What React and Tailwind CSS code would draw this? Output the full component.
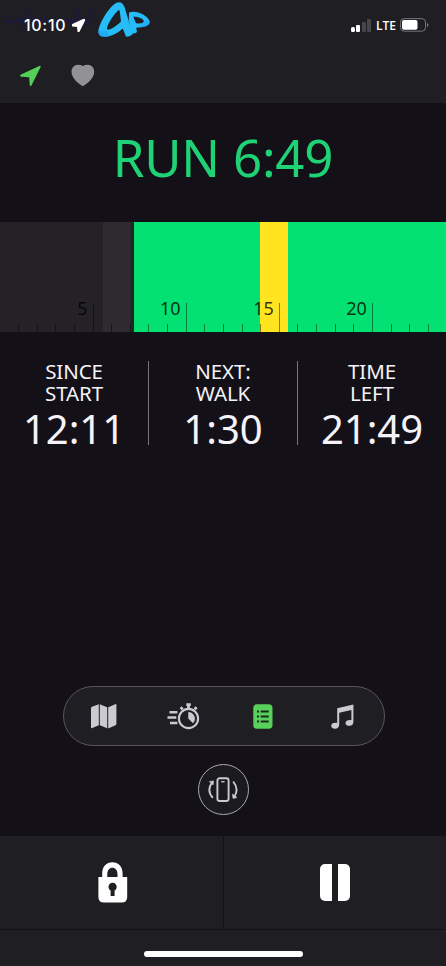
import { clsx } from "clsx";

const minutes = Array.from({ length: 24 }, (_, i) => i + 1);

const stats = [
  { label: ["SINCE", "START"], value: "12:11" },
  { label: ["NEXT:", "WALK"], value: "1:30" },
  { label: ["TIME", "LEFT"], value: "21:49" },
];

const NavArrow = ({ className }) => (
  <svg viewBox="0 0 22 22" className={className} fill="currentColor">
    <path d="M20.3 .4 1 9.5C-.2 10.1 0 11.6 1.2 11.8L9.6 12.4 10.2 20.5C10.3 21.8 11.5 22 12 20.9L21.6 1.7C22 .7 21.2 0 20.3 .4Z" />
  </svg>
);

const Logo = () => (
  <svg viewBox="97 1 54 38" className="h-[38px] w-[54px]" fillRule="evenodd">
    <path
      fill="#25bcf8"
      d="M98.3 32C98.5 24 109 7 116 3C120 .8 123 3 124.5 7L132.7 34.3Q129.5 36.8 126 36.8L122.8 28.5C117 34 109 37.5 103 36.8Q98.5 36 98.3 32ZM118.3 10.2C114 14 107.5 24 107 28.2C107 31.5 113 29 121 21.5L119.8 11.5Q119.3 9.4 118.3 10.2Z"
    />
    <path
      fill="#25bcf8"
      d="M129 12.5C136 9.5 147 15 149.6 21C151 26 143 27.5 136.2 27.7L137 32Q135 34 131.3 33.5L128.8 20ZM133.3 16.8L136 23.3C140 23.7 144.3 23 143.8 20.9C142.8 18.4 137.5 16.4 133.3 16.8Z"
    />
    <path fill="#1687ee" d="M98.8 29Q101 34 106.6 30.2L109 36.8Q106 37.2 103 36.8Q98.5 36 98.3 32Z" opacity=".35" />
    <path fill="#1687ee" d="M143.8 20.9L149.6 21C151 26 143 27.5 138 27.7Z" opacity=".25" />
  </svg>
);

const StatusBar = () => (
  <div className="relative flex h-[50px] items-start">
    <div dir="rtl" className="absolute left-0 top-0 w-[96px] text-center font-['DejaVu_Sans',sans-serif] text-[19px] leading-[32px] whitespace-nowrap text-[#1b1a44]">
      اولین سایت
    </div>
    <div className="relative ml-[24px] mt-[15px] w-[46px] font-['Inter',sans-serif] text-[16px] font-medium leading-5 tracking-[0.7px] text-white">
      10:10
    </div>
    <NavArrow className="relative ml-[2px] mt-[19px] h-[13px] w-[13px] stroke-white stroke-2 text-white" />
    <div className="ml-[12px] mt-px">
      <Logo />
    </div>
    <div className="ml-auto mr-[17px] mt-[18px] flex items-center">
      <div className="flex h-[13px] items-end gap-[1.5px]">
        <span className="h-[5px] w-[4px] rounded-[1.5px] bg-white" />
        <span className="h-[7px] w-[4px] rounded-[1px] bg-white" />
        <span className="h-[10px] w-[4px] rounded-[1px] bg-[#47464b]" />
        <span className="h-[13px] w-[4px] rounded-[1px] bg-[#47464b]" />
      </div>
      <span className="ml-[5px] font-['Open_Sans',sans-serif] text-[12px] font-semibold leading-[13px] text-white">LTE</span>
      <svg viewBox="0 0 29 14" className="ml-[4px] h-[14px] w-[29px]">
        <rect x=".5" y=".6" width="25" height="12.6" rx="3.6" fill="none" stroke="#77767b" />
        <rect x="2" y="2.1" width="15.5" height="9.6" rx="2" fill="#fff" />
        <path d="M27 5v4q1.5-.5 1.5-2T27 5Z" fill="#77767b" />
      </svg>
    </div>
  </div>
);

const Timeline = () => (
  <div className="relative h-[110px] overflow-hidden">
    <div className="flex h-full">
      <div className="w-[103px] bg-[#242226]" />
      <div className="w-[28px] bg-[#2d2b2f]" />
      <div className="w-[3px] bg-[#222522]" />
      <div className="w-[126.4px] bg-[#02e172]" />
      <div className="w-[28px] bg-[#ffe41f]" />
      <div className="flex-1 bg-[#02e172]" />
    </div>
    <div className="absolute bottom-0 left-[0.4px] flex h-[29px] items-end">
      {minutes.map((m) => {
        const major = m % 5 === 0;
        return (
          <div key={m} className={clsx("flex w-[18.63px] shrink-0 justify-end", major ? "h-[29px]" : "h-[8px]")}>
            {major && (
              <span className="-mt-px mr-[5px] whitespace-nowrap font-['Noto_Sans',sans-serif] text-[18px] leading-[13px] text-black/80">
                {m}
              </span>
            )}
            <span className="w-px shrink-0 bg-black/45" />
          </div>
        );
      })}
    </div>
  </div>
);

const MapIcon = () => (
  <svg viewBox="0 0 26 25" className="h-[25px] w-[26px]" fill="#cbcad0">
    <path d="M0 4.2Q0 3.2 1 2.8L7.8 .2V21.2L1.3 24Q0 24.5 0 23.3ZM8.8 .3 16.2 3.2V24.3L8.8 21.2ZM17.2 3.3 24.2 .2Q25.4-.2 25.4 1V19.8Q25.4 20.8 24.5 21.3L17.2 24.4Z" />
  </svg>
);

const StopwatchIcon = () => (
  <svg viewBox="0 0 33 27" className="h-[27px] w-[33px]" fill="none" stroke="#cbcad0">
    <circle cx="21.5" cy="15.5" r="9.6" strokeWidth="2.1" />
    <path d="M21.5 9.3V15.5L26 20A6.4 6.4 0 0 0 21.5 9.3Z" fill="#cbcad0" strokeWidth=".5" />
    <path d="M19.3 1.6H23.8M21.5 2V5.3M13.7 4.3 15.6 6.2M29.6 4.3 27.7 6.2" strokeWidth="2.8" />
    <path d="M2.5 9.2H10.4M.5 14.5H9.3M3 20H10.4" strokeWidth="2.4" />
  </svg>
);

const ListIcon = () => (
  <svg viewBox="0 0 20 25" className="h-[25px] w-[20px]">
    <rect x=".3" y=".3" width="19.2" height="24.4" rx="3.8" fill="#58d05a" />
    <path d="M4 7.5H6M7.7 7.5H15.7M4 12.5H6M7.7 12.5H15.7M4 17.5H6M7.7 17.5H15.7" stroke="#182a1c" strokeWidth="2.2" />
  </svg>
);

const MusicIcon = () => (
  <svg viewBox="0 0 23 25" className="h-[25px] w-[23px]" fill="#cbcad0">
    <path d="M6.2 4.2 22.4.5V17.7Q22.4 21.8 18.3 21.8C15.8 21.8 14.5 20.6 14.5 18.9C14.5 16.6 17 15.6 20.4 16V6.1L8.2 8.7V20.3Q8.2 24.7 3.8 24.7C1.5 24.7.2 23.5.2 21.8C.2 19.5 2.8 18.3 6.2 18.9Z" />
  </svg>
);

const RotateIcon = () => (
  <svg viewBox="0 0 32 26" className="h-[26px] w-[32px]" fill="none" stroke="#cbcad0">
    <rect x="10.4" y="1.2" width="11.2" height="22.8" rx="2.2" strokeWidth="1.9" />
    <path d="M14.3 4.7H17.5" strokeWidth="1.4" />
    <path d="M4.8 5.8Q-.6 13.5 5.8 20.9M26.2 4.5Q32.4 12 27.3 19.8" strokeWidth="1.9" />
    <path d="M2.3 4.5 6.6 3.9 6.1 8Z" fill="#cbcad0" strokeWidth=".6" />
    <path d="M25.4 17 26 21.4 30 20.5Z" fill="#cbcad0" strokeWidth=".6" />
  </svg>
);

const LockIcon = () => (
  <svg viewBox="0 0 30 41" className="h-[41px] w-[30px]" fill="#fff" fillRule="evenodd">
    <path d="M.4 15H4.2V11.5C4.2 4.5 8.5.3 14.4.3S24.6 4.5 24.6 11.5V15H29.2V35Q29.2 40.6 23.6 40.6H6Q.4 40.6.4 35ZM9.3 15H19.5V12.2C19.5 8 17.3 5.8 14.4 5.8S9.3 8 9.3 12.2ZM12.6 28.5V34H16.6V28.5A4.1 4.1 0 1 0 12.6 28.5Z" />
  </svg>
);

export default function App() {
  return (
    <div className="flex h-[966px] w-full flex-col overflow-hidden bg-[#131117] font-['Noto_Sans',sans-serif] text-[#f5f3f8]">
      <header className="h-[103px] shrink-0 bg-[#1f1e23]">
        <StatusBar />
        <div className="flex items-center gap-[30px] pl-[20px] pt-[14px]">
          <NavArrow className="h-[22px] w-[21px] text-[#53d058]" />
          <svg viewBox="0 0 24 23" className="h-[23px] w-[24px]" fill="#929194">
            <path d="M11.8 22.3C8 20.2.5 14.5.5 7.8C.5 3.7 3.3.7 6.8.7Q10 .7 11.8 2Q13.6.7 16.8.7C20.4.7 23.2 3.7 23.2 7.8C23.2 14.5 15.7 20.2 11.8 22.3Z" />
          </svg>
        </div>
      </header>

      <h1 className="flex h-[119px] shrink-0 items-center justify-center pb-[11px] text-[51px] font-[380] leading-none tracking-[-0.2px] text-[#20d276]">
        RUN 6:49
      </h1>

      <Timeline />

      <section className="mt-[29px] flex h-[84px] shrink-0">
        {stats.map((stat, i) => (
          <div
            key={stat.value}
            className={clsx("flex flex-1 flex-col items-center text-center", i < 2 && "border-r border-[#77757c]")}
          >
            <p className="text-[20.5px] font-[370] leading-[21.5px] tracking-[-0.1px]">
              {stat.label[0]}
              <br />
              {stat.label[1]}
            </p>
            <p className="mt-[5px] text-[40px] leading-[40px]">{stat.value}</p>
          </div>
        ))}
      </section>

      <nav className="mx-auto mt-auto flex h-[60px] w-[322px] shrink-0 translate-x-px items-center rounded-full border border-[#58565c] bg-[#1f1e23] pr-[2px]">
        <button className="flex flex-1 justify-center"><MapIcon /></button>
        <button className="flex flex-1 justify-center"><StopwatchIcon /></button>
        <button className="flex flex-1 justify-center"><ListIcon /></button>
        <button className="flex flex-1 justify-center"><MusicIcon /></button>
      </nav>

      <button className="mx-auto mb-[21px] mt-[18px] flex size-[51px] shrink-0 items-center justify-center rounded-full border border-[#aaa8af] bg-[#1b1a1f]">
        <RotateIcon />
      </button>

      <footer className="h-[130px] shrink-0 bg-[#1f1e23]">
        <div className="flex h-[94px] border-b border-[#131117]">
          <button className="flex w-[224px] items-center justify-center border-r border-[#131117] pl-[2px]">
            <LockIcon />
          </button>
          <button className="flex flex-1 items-center justify-center gap-[6px]">
            <span className="h-[37px] w-[12px] rounded-l-[5px] bg-white" />
            <span className="h-[37px] w-[12px] rounded-r-[5px] bg-white" />
          </button>
        </div>
        <div className="mx-auto mt-[21px] h-[6px] w-[159px] rounded-full bg-white" />
      </footer>
    </div>
  );
}
